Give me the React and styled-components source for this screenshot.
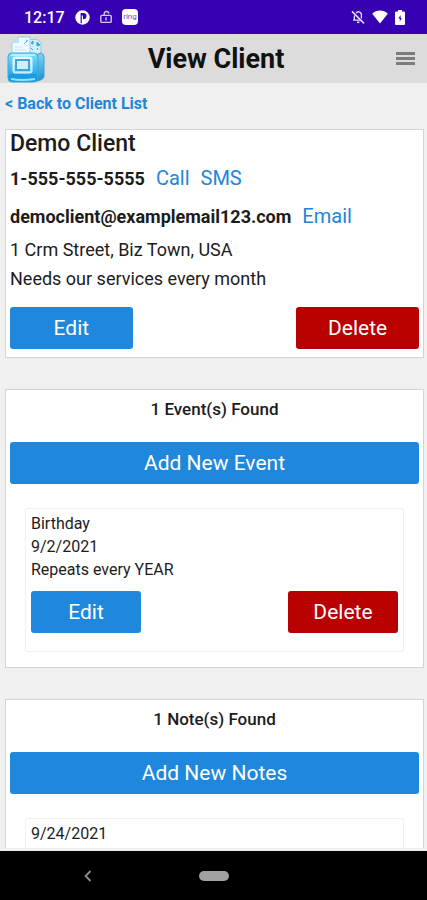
import React from "react";
import styled, { createGlobalStyle } from "styled-components";

const client = {
  name: "Demo Client",
  phone: "1-555-555-5555",
  email: "democlient@examplemail123.com",
  address: "1 Crm Street, Biz Town, USA",
  info: "Needs our services every month",
};

const events = [{ id: 1, title: "Birthday", date: "9/2/2021", repeat: "YEAR" }];
const notes = [{ id: 1, date: "9/24/2021" }];

const Logo = () => (
  <svg width="38" height="48" viewBox="0 0 38 48" aria-hidden="true">
    <defs>
      <linearGradient id="body" x1="0" y1="0" x2="0" y2="1">
        <stop offset="0" stopColor="#7fe0fb" />
        <stop offset="0.5" stopColor="#3cbdf0" />
        <stop offset="1" stopColor="#1593dc" />
      </linearGradient>
      <linearGradient id="side" x1="0" y1="0" x2="0" y2="1">
        <stop offset="0" stopColor="#7fd6f5" />
        <stop offset="1" stopColor="#1e8fd0" />
      </linearGradient>
      <linearGradient id="plate" x1="0" y1="0" x2="0" y2="1">
        <stop offset="0" stopColor="#f2fcff" />
        <stop offset="1" stopColor="#9adcf6" />
      </linearGradient>
    </defs>
    <path d="M20 5l10-1 4 4v14H20z" fill="#d3effa" stroke="#8ccbe6" />
    <path d="M24 8l2-2v3zM30 7l3 3-3 1zM24 13l2 2M30 13l1 2" fill="#2f9fd8" stroke="#3aa6dc" />
    <path d="M5 8l7-6h11v20H5z" fill="#eefaff" stroke="#9bd2e8" />
    <path d="M5 8l7-6v6z" fill="#b8e3f3" />
    <path d="M19 5l2 1M17 9l3-3" stroke="#4fb5e0" />
    <path d="M8 12h8M8 15h11" stroke="#c2e6f3" />
    <path d="M29 20l5-2q3 1 3 4v20q-1 3-7 4z" fill="url(#side)" stroke="#3a9fd0" />
    <rect x="1" y="18" width="30" height="29" rx="4" fill="url(#body)" stroke="#3aa9dd" />
    <path d="M4 20h24" stroke="#b5f1ff" strokeWidth="2" />
    <path d="M2 39h28v4q0 3-4 3H6q-4 0-4-3z" fill="#1c9ae2" />
    <path d="M4 44q11 2 24 0" stroke="#8fe5fb" strokeWidth="2" fill="none" />
    <rect x="6" y="22" width="19" height="16" rx="2" fill="url(#plate)" stroke="#dff8ff" />
    <rect x="9" y="25" width="13" height="10" fill="#cdf0fc" stroke="#3aa6dc" strokeWidth="2" />
  </svg>
);

const CircleIcon = () => (
  <svg width="15" height="15" viewBox="0 0 15 15" aria-hidden="true">
    <circle cx="7.5" cy="7.5" r="7.2" fill="#fff" />
    <path d="M6 3h2.4a3 3 0 0 1 0 6.2H8V5.6H6.8v7.6H5.6V3z" fill="#3700b3" />
  </svg>
);

const LockIcon = () => (
  <svg width="12" height="14" viewBox="0 0 12 14" aria-hidden="true">
    <g fill="none" stroke="#d5c8f2" strokeWidth="1.4">
      <rect x="0.8" y="5.4" width="10.4" height="7" rx="1" />
      <path d="M4.2 5.4V4a2.3 2.3 0 0 1 4.6-.4M6 7.2v3.4" />
    </g>
  </svg>
);

const RingIcon = () => (
  <svg width="16" height="16" viewBox="0 0 16 16" aria-hidden="true">
    <rect width="16" height="16" rx="4" fill="#fff" />
    <text x="8" y="10" textAnchor="middle" fontSize="8" fill="#6a4bc4">ring</text>
  </svg>
);

const BellOffIcon = () => (
  <svg width="14" height="14" viewBox="0 0 14 14" aria-hidden="true">
    <g fill="none" stroke="#e6defa" strokeWidth="1.3">
      <path d="M3.4 5.4v4.8H2M5 3.1a3 3 0 0 1 5.4 2.3v3M3.4 10.2h6.4M7.3 1v1.4" />
      <path d="M1 1.4l12 12" strokeWidth="1.5" />
      <path d="M6 12.3h2.4" strokeWidth="1.6" />
    </g>
  </svg>
);

const WifiIcon = () => (
  <svg width="16" height="14" viewBox="0 0 16 14" aria-hidden="true">
    <path d="M8 13.6L.2 3.7Q3.4.6 8 .6t7.8 3.1z" fill="#fff" />
  </svg>
);

const BatteryIcon = () => (
  <svg width="10" height="15" viewBox="0 0 10 15" aria-hidden="true">
    <path d="M3 0h4v1.6h2q1 0 1 1V14q0 1-1 1H1q-1 0-1-1V2.6q0-1 1-1h2z" fill="#fff" />
    <path d="M5.6 5L3.4 8.6h1.4v2.8l2-3.4H5.6z" fill="#3700b3" />
  </svg>
);

const App = () => {
  return (
    <>
      <GlobalStyle />
      <Screen>
        <StatusBar>
          <Time>12:17</Time>
          <CircleIcon />
          <LockIcon />
          <RingIcon />
          <StatusRight>
            <BellOffIcon />
            <WifiIcon />
            <BatteryIcon />
          </StatusRight>
        </StatusBar>
        <Header>
          <Logo />
          <h1>View Client</h1>
          <MenuButton aria-label="Menu">
            <span />
            <span />
            <span />
          </MenuButton>
        </Header>
        <Content>
          <BackLink href="#clients">&lt; Back to Client List</BackLink>

          <Card>
            <ClientName>{client.name}</ClientName>
            <ContactRow>
              <strong>{client.phone}</strong>
              <a href={`tel:${client.phone}`}>Call</a>
              <a href={`sms:${client.phone}`}>SMS</a>
            </ContactRow>
            <ContactRow>
              <strong>{client.email}</strong>
              <a href={`mailto:${client.email}`}>Email</a>
            </ContactRow>
            <ClientDetails>
              <p>{client.address}</p>
              <p>{client.info}</p>
            </ClientDetails>
            <ButtonRow>
              <Button>Edit</Button>
              <Button $danger>Delete</Button>
            </ButtonRow>
          </Card>

          <Card>
            <Found>{events.length} Event(s) Found</Found>
            <Button $full>Add New Event</Button>
            {events.map((event) => (
              <Item key={event.id}>
                <p>{event.title}</p>
                <p>{event.date}</p>
                <p>Repeats every {event.repeat}</p>
                <ButtonRow>
                  <Button>Edit</Button>
                  <Button $danger>Delete</Button>
                </ButtonRow>
              </Item>
            ))}
          </Card>

          <Card>
            <Found>{notes.length} Note(s) Found</Found>
            <Button $full>Add New Notes</Button>
            {notes.map((note) => (
              <Item key={note.id}>
                <p>{note.date}</p>
              </Item>
            ))}
          </Card>
        </Content>
        <NavBar>
          <NavButton aria-label="Back">
            <svg width="8" height="12" viewBox="0 0 8 12">
              <path d="M6.5 1L1.6 6l4.9 5" fill="none" stroke="#8f8f8f" strokeWidth="1.8" />
            </svg>
          </NavButton>
          <HomeButton aria-label="Home">
            <span />
          </HomeButton>
        </NavBar>
      </Screen>
    </>
  );
};

export default App;

const GlobalStyle = createGlobalStyle`
  * {
    box-sizing: border-box;
  }
  body {
    margin: 0;
    font-family: Roboto, sans-serif;
    color: #1c1c1c;
    background-color: #f0f0f0;
  }
  h1, h2, h3, p {
    margin: 0;
  }
  a {
    color: #2186d8;
    text-decoration: none;
  }
  button {
    font-family: inherit;
    border: none;
    padding: 0;
    cursor: pointer;
  }
`;

const Screen = styled.div`
  display: flex;
  flex-direction: column;
  height: 100vh;
  overflow: hidden;
`;

const StatusBar = styled.div`
  display: flex;
  align-items: center;
  flex: none;
  gap: 10px;
  height: 34px;
  padding: 0 22px 0 24px;
  background-color: #3700b3;
`;

const Time = styled.span`
  font-size: 16px;
  font-weight: 500;
  color: #fff;
`;

const StatusRight = styled.div`
  display: flex;
  align-items: center;
  gap: 7px;
  margin-left: auto;
`;

const Header = styled.header`
  display: flex;
  align-items: center;
  flex: none;
  height: 49px;
  padding: 0 12px 0 7px;
  background-color: #dcdcdc;
  & > h1 {
    flex: 1;
    font-size: 27px;
    font-weight: 700;
    text-align: center;
    color: #111;
  }
`;

const MenuButton = styled.button`
  display: flex;
  flex-direction: column;
  align-items: flex-end;
  gap: 2px;
  width: 28px;
  background: none;
  & > span {
    width: 19px;
    height: 3px;
    background-color: #7c7c7c;
  }
`;

const Content = styled.main`
  flex: 1;
  min-height: 0;
  overflow: hidden;
  padding: 0 3px 0 5px;
  border-bottom: 3px solid #f0f0f0;
`;

const BackLink = styled.a`
  display: block;
  height: 46px;
  font-size: 16px;
  font-weight: 700;
  line-height: 41px;
`;

const Card = styled.section`
  margin-bottom: 31px;
  padding: 0 4px 8px;
  border: 1px solid #d4d4d4;
  background-color: #fff;
`;

const ClientName = styled.h2`
  padding-bottom: 2px;
  font-size: 23px;
  font-weight: 500;
  line-height: 27px;
`;

const ContactRow = styled.div`
  display: flex;
  align-items: baseline;
  gap: 11px;
  height: 38px;
  font-size: 20px;
  line-height: 38px;
  & > strong {
    font-size: 18px;
    font-weight: 700;
  }
`;

const ClientDetails = styled.div`
  padding-bottom: 4px;
  & > p {
    font-size: 18px;
    line-height: 29px;
  }
`;

const ButtonRow = styled.div`
  display: flex;
  justify-content: space-between;
  margin-top: 10px;
`;

const Button = styled.button`
  display: block;
  width: ${({ $full }) => ($full ? "100%" : "30%")};
  height: 42px;
  border-radius: 3px;
  font-size: 21px;
  color: #fff;
  background-color: ${({ $danger }) => ($danger ? "#b80000" : "#2088dc")};
`;

const Found = styled.h3`
  margin-bottom: 14px;
  font-size: 17px;
  font-weight: 500;
  line-height: 38px;
  text-align: center;
`;

const Item = styled.div`
  margin: 24px 15px 7px;
  padding: 3px 5px 18px;
  border: 1px solid #f0f0f0;
  border-radius: 2px;
  & > p {
    font-size: 16px;
    line-height: 23px;
  }
`;

const NavBar = styled.nav`
  display: grid;
  grid-template-columns: 1fr 76px 1fr;
  flex: none;
  height: 49px;
  background-color: #000;
`;

const NavButton = styled.button`
  display: flex;
  align-items: center;
  justify-content: center;
  background: none;
`;

const HomeButton = styled(NavButton)`
  & > span {
    width: 30px;
    height: 10px;
    border-radius: 5px;
    background-color: #a0a0a0;
  }
`;
